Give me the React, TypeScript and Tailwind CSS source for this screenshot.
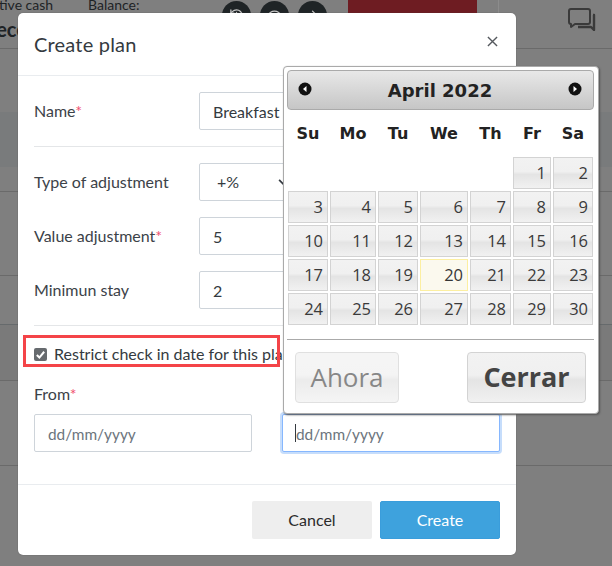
import { ArrowRight, Eye, History } from 'lucide-react'

const DAYS = ['Su', 'Mo', 'Tu', 'We', 'Th', 'Fr', 'Sa']

const COLS = 'grid grid-cols-[40px_46px_40px_48px_41px_38px_40px] gap-[2px]'
const CELL_BG = 'bg-[linear-gradient(#f2f2f2,#f0f0f0_45%,#e4e4e4_55%,#f1f1f1)]'

function Req() {
  return <span className="text-[#f0506e]">*</span>
}

function TextField({ value, placeholder, className = 'border-[#ced4da]' }: { value?: string; placeholder?: string; className?: string }) {
  return (
    <input
      readOnly
      value={value}
      placeholder={placeholder}
      className={`h-[38px] rounded-[2px] border bg-white px-[13px] text-[16px] text-[#343a40] placeholder:text-[15.4px] placeholder:text-[#6c757d] outline-none ${className}`}
    />
  )
}

function FormRow({ label, children }: { label: React.ReactNode; children: React.ReactNode }) {
  return (
    <div className="flex items-center">
      <div className="w-[165px] text-[16px] text-[#3c4248]">{label}</div>
      {children}
    </div>
  )
}

function Background() {
  return (
    <div className="flex h-full flex-col bg-[#7f7f7f] [font-family:Lato,sans-serif] text-[#1e2326]">
      <div className="flex h-[49px] shrink-0 border-b border-[#6a6a6a]">
        <div className="ml-[-17px] w-[105px] shrink-0">
          <div className="mt-[-4px] text-[14px] leading-[18px]">Active cash</div>
          <div className="ml-[1px] mt-[3px] text-[20px] font-bold leading-[24px]">Rece</div>
        </div>
        <div className="mt-[-4px] w-[134px] shrink-0 text-[14px] leading-[18px]">Balance:</div>
        <div className="mt-[1px] flex gap-[9px]">
          <div className="flex h-[29px] w-[29px] items-center justify-center rounded-full bg-[#1f2426] text-[#c8c8c8]"><History size={15} /></div>
          <div className="flex h-[29px] w-[29px] items-center justify-center rounded-full bg-[#1f2426] text-[#c8c8c8]"><Eye size={15} /></div>
          <div className="flex h-[29px] w-[29px] items-center justify-center rounded-full bg-[#1f2426] text-[#c8c8c8]"><ArrowRight size={15} /></div>
        </div>
        <div className="ml-[21px] flex h-[38px] w-[129px] shrink-0 justify-center bg-[#6e1c22] pt-[10px] text-[14px] leading-[18px] text-[#d9b8ba]">Close cash</div>
        <div className="ml-[21px] h-[48px] w-px bg-[#8c8c8c]" />
        <svg viewBox="0 0 28 23" className="ml-[69px] mt-[8px] h-[23px] w-[28px] shrink-0" fill="none" stroke="#3a3a3a" strokeWidth="2">
          <path d="M3 1h17a2 2 0 0 1 2 2v11a2 2 0 0 1-2 2H7l-4 3v-3a2 2 0 0 1-2-2V3a2 2 0 0 1 2-2z" strokeLinejoin="round" />
          <path d="M25 7h1v12v3l-3-3H10" strokeWidth="2.4" strokeLinejoin="round" />
        </svg>
      </div>
      <div className="h-[63px] shrink-0" />
      <div className="h-[55px] shrink-0 bg-[#797b7c]" />
      <div className="h-[25px] shrink-0 border-b border-[#6a6a6a]" />
      <div className="h-[84px] shrink-0 border-b border-[#6a6a6a]" />
      <div className="h-[49px] shrink-0 border-b border-[#666a6c]" />
      <div className="h-[56px] shrink-0 border-b border-[#6a6a6a] bg-[#7a7a7a]" />
      <div className="h-[85px] shrink-0 border-b border-[#6a6a6a]" />
    </div>
  )
}

function Modal() {
  return (
    <div className="absolute left-[18px] top-[13px] flex h-[542px] w-[498px] flex-col rounded-[5px] bg-white [font-family:Lato,sans-serif] shadow-[0_0_1px_#444]">
      <div className="flex h-[63px] shrink-0 items-center justify-between border-b border-[#e9ecef] pl-[16px] pr-[18px]">
        <h2 className="text-[20px] tracking-[0.2px] text-[#343a40]">Create plan</h2>
        <svg viewBox="0 0 12 12" className="mb-[5px] h-[11px] w-[11px]" stroke="#55595e" strokeWidth="1.5">
          <path d="M1 1l10 10M11 1L1 11" />
        </svg>
      </div>

      <div className="flex flex-col px-[16px] pt-[16px]">
        <FormRow label={<>Name<Req /></>}>
          <TextField value="Breakfast" className="w-[301px] border-[#ced4da]" />
        </FormRow>
        <div className="mb-[16px] mt-[16px] h-px w-[466px] bg-[#e4e6e8]" />
        <div className="flex flex-col gap-[16px]">
          <FormRow label="Type of adjustment">
            <div className="flex h-[38px] w-[100px] items-center justify-between rounded-[2px] border border-[#ced4da] pl-[17px] pr-[9px] text-[16px] text-[#343a40]">
              +%
              <svg viewBox="0 0 12 8" className="h-[7px] w-[11px]" fill="none" stroke="#343a40" strokeWidth="2">
                <path d="M1 1l5 5 5-5" />
              </svg>
            </div>
          </FormRow>
          <FormRow label={<>Value adjustment<Req /></>}>
            <TextField value="5" className="w-[100px] border-[#ced4da]" />
          </FormRow>
          <FormRow label="Minimun stay">
            <TextField value="2" className="w-[100px] border-[#ced4da]" />
          </FormRow>
        </div>
        <div className="mt-[16px] h-px w-[466px] bg-[#e4e6e8]" />
        <label className="mt-[21px] flex h-[14px] items-center gap-[7px] text-[16px] whitespace-nowrap text-[#343a40]">
          <span className="flex h-[13px] w-[13px] shrink-0 items-center justify-center rounded-[2px] bg-[#666a6e]">
            <svg viewBox="0 0 12 12" className="h-[11px] w-[11px]" fill="none" stroke="white" strokeWidth="2.2">
              <path d="M2 6.5l2.8 2.8L10 3" />
            </svg>
          </span>
          Restrict check in date for this plan
        </label>
        <div className="mt-[23px] h-[20px] text-[16px] leading-[20px] text-[#3c4248]">From<Req /></div>
        <div className="mt-[10px] flex gap-[30px]">
          <TextField placeholder="dd/mm/yyyy" className="w-[218px] border-[#ced4da]" />
          <div className="relative">
            <TextField placeholder="dd/mm/yyyy" className="w-[218px] border-[#86b7fe] shadow-[0_0_0_2px_#c6ddfb]" />
            <span className="absolute left-[13px] top-[10px] h-[18px] w-px bg-[#343a40]" />
          </div>
        </div>
      </div>

      <div className="mt-auto flex h-[71px] shrink-0 items-start justify-end gap-[8px] border-t border-[#e9ecef] pr-[16px] pt-[16px]">
        <button className="h-[38px] w-[120px] rounded-[2px] bg-[#eeeeee] text-[16px] text-[#2b2b2b]">Cancel</button>
        <button className="h-[38px] w-[120px] rounded-[2px] border border-[#3a9ddb] bg-[#3ea2dd] text-[16px] text-white">Create</button>
      </div>
    </div>
  )
}

function DatePicker() {
  const cells: (number | null)[] = [null, null, null, null, null]
  for (let d = 1; d <= 30; d++) cells.push(d)

  return (
    <div className="absolute left-[283px] top-[66px] h-[348px] w-[316px] rounded-[4px] border border-[#aaaaaa] bg-white pl-[3px] pt-[3px] shadow-[1px_1px_2px_#555] [font-family:'DejaVu_Sans',sans-serif]">
      <div className="flex h-[40px] w-[307px] items-center justify-between rounded-[4px] border border-[#aaaaaa] bg-[linear-gradient(#e8e8e8,#c6c6c6)] pl-[10px] pr-[11px]">
        <Arrow dir="left" />
        <span className="text-[18px] font-bold text-[#222222]">April 2022</span>
        <Arrow dir="right" />
      </div>
      <div className={`${COLS} ml-[1px] h-[47px] items-center`}>
        {DAYS.map((d) => (
          <div key={d} className="text-center text-[16px] font-bold text-[#222222]">{d}</div>
        ))}
      </div>
      <div className={`${COLS} ml-[1px] auto-rows-[32px]`}>
        {cells.map((d, i) =>
          d === null ? (
            <div key={i} />
          ) : (
            <div
              key={i}
              className={`flex items-center justify-end border pr-[4px] text-[16.5px] [font-family:'Open_Sans',sans-serif] ${
                d === 20 ? 'border-[#fcefa1] bg-[#fbf9ee] text-[#363636]' : `border-[#d3d3d3] ${CELL_BG} text-[#3a3a3a]`
              }`}
            >
              {d}
            </div>
          ),
        )}
      </div>
      <div className="mt-[14px] h-px w-[307px] bg-[#aaaaaa]" />
      <div className="mt-[12px] flex justify-between pl-[8px] pr-[12px]">
        <button className={`h-[51px] w-[104px] rounded-[4px] border border-[#d3d3d3] ${CELL_BG} text-[26px] text-[#555555] opacity-70 [font-family:'Open_Sans',sans-serif]`}>
          Ahora
        </button>
        <button className={`h-[51px] w-[119px] rounded-[4px] border border-[#d3d3d3] ${CELL_BG} text-[27px] font-bold text-[#444444] [font-family:'Open_Sans',sans-serif]`}>
          Cerrar
        </button>
      </div>
    </div>
  )
}

function Arrow({ dir }: { dir: 'left' | 'right' }) {
  return (
    <svg viewBox="0 0 14 14" className="mb-[2px] h-[14px] w-[14px]">
      <circle cx="7" cy="7" r="6.5" fill="#111111" />
      <path d={dir === 'left' ? 'M8.5 4v6L5 7z' : 'M5.5 4v6L9 7z'} fill="white" />
    </svg>
  )
}

export default function App() {
  return (
    <div className="relative h-[566px] w-[612px] overflow-hidden">
      <Background />
      <Modal />
      {/* annotation round the checkbox */}
      <div className="absolute left-[23px] top-[335px] h-[32px] w-[257px] border-[3px] border-[#f44448]" />
      <DatePicker />
    </div>
  )
}
